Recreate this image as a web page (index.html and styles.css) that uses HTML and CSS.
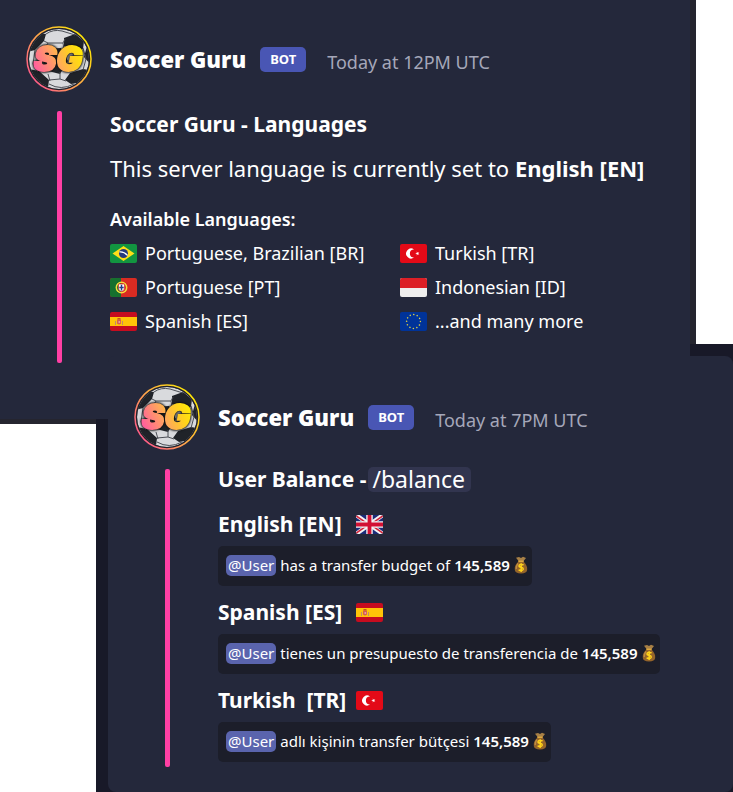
FILE: index.html
```html
<!DOCTYPE html>
<html lang="en">
<head>
<meta charset="utf-8">
<meta name="viewport" content="width=device-width, initial-scale=1">
<title>Soccer Guru - Languages</title>
<link rel="stylesheet" href="styles.css">
</head>
<body>
<svg class="sprite" aria-hidden="true">
  <defs>
    <linearGradient id="ring" x1="0" y1="1" x2="1" y2="0.2">
      <stop offset="0" stop-color="#ff3f9f"/><stop offset="0.5" stop-color="#ffa24e"/><stop offset="1" stop-color="#ffee00"/>
    </linearGradient>
    <linearGradient id="letters" x1="0" y1="0.6" x2="1" y2="0.2">
      <stop offset="0" stop-color="#ff5f9c"/><stop offset="0.45" stop-color="#ffab58"/><stop offset="0.75" stop-color="#ffd21c"/><stop offset="1" stop-color="#fff000"/>
    </linearGradient>
    <clipPath id="ball"><circle cx="33" cy="33" r="30"/></clipPath>
    <clipPath id="round"><rect width="27" height="19" rx="2"/></clipPath>
  </defs>
  <symbol id="logo" viewBox="0 0 66 66">
    <circle cx="33" cy="33" r="32" fill="#22232c" stroke="url(#ring)" stroke-width="1.5"/>
    <g clip-path="url(#ball)">
      <circle cx="33" cy="33" r="30" fill="#d9dadd"/>
      <path d="M12 7 L20 8 L18 15 L9 24 L1 26 V12Z M38 12 L49 8 L58 15 L57 23 L46 22 L38 20Z M61 20 L65 28 L64 38 L58 31Z M16 23 L35 22 L42 35 L34 48 L18 44Z M3 43 L13 45 L23 54 L22 62 L10 58Z M44 47 L57 43 L63 44 L57 56 L45 58 L39 54Z" fill="#202329"/>
      <path d="M20 8 Q27 3 36 5 L49 9 M18 15 L22 17 L37 17 L39 13 M22 17 L17 25 M37 17 L38 23 M9 24 L7 38 L12 46 M57 22 L60 33 L57 44 M23 54 L34 53 L40 55 M34 53 V46 M23 58 Q35 65 48 58 M22 48 L24 55" fill="none" stroke="#4b4e55" stroke-width="1"/>
    </g>
  </symbol>
  <symbol id="br" viewBox="0 0 27 19"><g clip-path="url(#round)"><rect width="27" height="19" fill="#129540"/><path d="M13.500 2 24.500 9.500 13.500 17 2.500 9.500Z" fill="#fedf17"/><circle cx="13.500" cy="9.500" r="4.500" fill="#263a7e"/><path d="M9.500 8Q14 7.500 17.500 11.500" fill="none" stroke="#fff" stroke-width="1.200"/></g></symbol>
  <symbol id="pt" viewBox="0 0 27 19"><g clip-path="url(#round)"><rect width="27" height="19" fill="#d92b22"/><rect width="11" height="19" fill="#16702e"/><circle cx="11.500" cy="9.500" r="5.200" fill="none" stroke="#f5dc3c" stroke-width="1.500"/><path d="M8.500 6H14.500V10Q14.500 13 11.500 13.500Q8.500 13 8.500 10Z" fill="#fff" stroke="#d92b22" stroke-width="0.700"/><path d="M11.500 6.800V12.500M9.300 9.500H13.700" stroke="#273e88" stroke-width="1.500"/></g></symbol>
  <symbol id="es" viewBox="0 0 27 19"><g clip-path="url(#round)"><rect width="27" height="19" fill="#c60c1f"/><rect y="5" width="27" height="9" fill="#ffc408"/><path d="M7 7.500H11V11.500Q9 13.500 7 11.500Z" fill="#d45e4f"/><path d="M7.500 6.800H10.500" stroke="#b42b22"/><path d="M5.500 9V13M12.500 9V13" stroke="#c08a6c"/><circle cx="9.300" cy="10" r="1" fill="#eca0a8"/></g></symbol>
  <symbol id="tr" viewBox="0 0 27 19"><g clip-path="url(#round)"><rect width="27" height="19" fill="#e30a17"/><path d="M14 5.400A5 5 0 1 0 14 13.600A4.100 4.100 0 1 1 14 5.400Z" fill="#fff"/><path d="M15.200 9.500 16.800 9 16.800 7.400 17.800 8.700 19.300 8.200 18.400 9.500 19.300 10.800 17.800 10.300 16.800 11.600 16.800 10Z" fill="#fff"/></g></symbol>
  <symbol id="id" viewBox="0 0 27 19"><g clip-path="url(#round)"><rect width="27" height="19" fill="#eee"/><rect width="27" height="10" fill="#dc1f26"/></g></symbol>
  <symbol id="eu" viewBox="0 0 27 19"><g clip-path="url(#round)"><rect width="27" height="19" fill="#039"/><circle cx="13.500" cy="9.500" r="6.900" fill="none" stroke="#d8cd47" stroke-width="1.500" stroke-linecap="round" stroke-dasharray="0.100 3.513"/></g></symbol>
  <symbol id="gb" viewBox="0 0 27 19"><g clip-path="url(#round)"><rect width="27" height="19" fill="#1b2b78"/><path d="M0 0 27 19M27 0 0 19" stroke="#f3f3f5" stroke-width="4.200"/><path d="M-1 0 12 9.200M28 19 15 9.800M28 0 15 9.200M-1 19 12 9.800" stroke="#d32338" stroke-width="1.500"/><path d="M13.500 0V19M0 9.500H27" stroke="#f3f3f5" stroke-width="6.500"/><path d="M13.500 0V19M0 9.500H27" stroke="#d21034" stroke-width="3.800"/></g></symbol>
  <symbol id="bag" viewBox="0 0 14 18"><path d="M2 1.800 5 1 7 2 9 .8 12 2 9.600 5H4.600Z" fill="#a88046"/><path d="M4.500 5.500C1.500 8 .5 10.500.8 14Q1.200 17.300 7 17.400Q12.800 17.300 13.200 14C13.500 10.500 12 8 9.500 5.500Z" fill="#94642a"/><path d="M4 7.500Q2 10 2.200 13" fill="none" stroke="#c08c43" stroke-width="1.300"/><path d="M4.300 5.300H9.700" stroke="#dda83f" stroke-width="1.500"/><path d="M9.600 8.800Q5.200 7.700 5 9.800Q5 11.200 7.200 11.400Q9.500 11.700 9.100 13.500Q8.500 15.200 4.600 14M7.200 7.300V16" fill="none" stroke="#ffd31a" stroke-width="1.500"/></symbol>
</svg>

<main class="showcase">
  <article class="message message-back">
    <div class="panel">
      <header class="message-header">
        <svg class="avatar" viewBox="0 0 66 66" role="img" aria-label="Soccer Guru logo"><use href="#logo"/><text class="logo-text" x="32" y="45" text-anchor="middle">SG</text></svg>
        <h2 class="author">Soccer Guru</h2>
        <span class="badge">BOT</span>
        <time class="time">Today at 12PM UTC</time>
      </header>
      <div class="embed">
        <h3 class="title">Soccer Guru - Languages</h3>
        <p class="status">This server language is currently set to <strong>English [EN]</strong></p>
        <h4 class="subtitle">Available Languages:</h4>
        <ul class="languages">
          <li><svg class="flag"><use href="#br"/></svg>Portuguese, Brazilian [BR]</li>
          <li><svg class="flag"><use href="#tr"/></svg>Turkish [TR]</li>
          <li><svg class="flag"><use href="#pt"/></svg>Portuguese [PT]</li>
          <li><svg class="flag"><use href="#id"/></svg>Indonesian [ID]</li>
          <li><svg class="flag"><use href="#es"/></svg>Spanish [ES]</li>
          <li><svg class="flag"><use href="#eu"/></svg>...and many more</li>
        </ul>
      </div>
    </div>
  </article>

  <article class="message message-front">
    <div class="panel">
      <header class="message-header">
        <svg class="avatar" viewBox="0 0 66 66" role="img" aria-label="Soccer Guru logo"><use href="#logo"/><text class="logo-text" x="32" y="45" text-anchor="middle">SG</text></svg>
        <h2 class="author">Soccer Guru</h2>
        <span class="badge">BOT</span>
        <time class="time">Today at 7PM UTC</time>
      </header>
      <div class="embed">
        <h3 class="title title-command">User Balance - <span class="command">/balance</span></h3>
        <h4 class="locale"><span class="locale-name">English [EN]</span><svg class="flag"><use href="#gb"/></svg></h4>
        <p class="reply"><span class="mention">@User</span><span>has a transfer budget of <b>145,589</b></span><svg class="bag"><use href="#bag"/></svg></p>
        <h4 class="locale"><span class="locale-name">Spanish [ES]</span><svg class="flag"><use href="#es"/></svg></h4>
        <p class="reply"><span class="mention">@User</span><span>tienes un presupuesto de transferencia de <b>145,589</b></span><svg class="bag"><use href="#bag"/></svg></p>
        <h4 class="locale"><span class="locale-name">Turkish&nbsp; [TR]</span><svg class="flag"><use href="#tr"/></svg></h4>
        <p class="reply"><span class="mention">@User</span><span>adlı kişinin transfer bütçesi <b>145,589</b></span><svg class="bag"><use href="#bag"/></svg></p>
      </div>
    </div>
  </article>
</main>
</body>
</html>
```
FILE: styles.css
```css
* { box-sizing: border-box; }

body {
  margin: 0;
  background: #fff;
  color: #fff;
  font-family: "Noto Sans", sans-serif;
}

h2, h3, h4, p, ul { margin: 0; padding: 0; }

.sprite { position: absolute; width: 0; height: 0; }

.showcase { overflow: hidden; }

.message-back {
  margin-right: 37px;
  padding: 0 6px 5px 0;
  background: #25252f;
}

.message-front {
  position: relative;
  margin: -80px 0 0 96px;
  padding: 12px 0 0 12px;
  background: #181928;
}

.panel {
  position: relative;
  z-index: 1;
  background: #24283b;
}

.message-back .panel { padding: 26px 20px 56px 26px; }

.message-front .panel {
  z-index: 2;
  padding: 28px 20px 25px 26px;
  border-radius: 6px 8px 8px 8px;
}

.message-header {
  display: flex;
  align-items: center;
  height: 66px;
}

.avatar { width: 66px; height: 66px; flex: none; }

.logo-text {
  font: italic 900 34px "Inter", sans-serif;
  fill: url(#letters);
  stroke: url(#letters);
  stroke-width: 2px;
  filter: drop-shadow(0 0 1px #111) drop-shadow(0 0 1px #111);
}

.author {
  margin-left: 18px;
  font-size: 22px;
  line-height: 32px;
  font-weight: 900;
}

.badge {
  margin-left: 14px;
  padding: 0 10px;
  border-radius: 5px;
  background: #4956b4;
  font-size: 13px;
  line-height: 25px;
  font-weight: 700;
}

.time {
  margin: 6px 0 0 21px;
  color: #a5a7b9;
  font-size: 18px;
  line-height: 26px;
}

.embed {
  display: flow-root;
  position: relative;
  margin: 19px 0 0 31px;
  padding-left: 53px;
}

.embed::before {
  content: "";
  position: absolute;
  top: 0;
  bottom: 0;
  left: 0;
  width: 5px;
  border-radius: 2px;
  background: #ff3fa4;
}

.message-front .embed { padding-bottom: 5px; }

.title {
  font-size: 21px;
  line-height: 26px;
  font-weight: 700;
}

.title-command {
  display: flex;
  align-items: center;
  gap: 2px;
  margin: -3px 0 16px;
}

.status {
  margin-top: 15px;
  font-size: 22px;
  line-height: 32px;
}

.subtitle {
  margin-top: 22px;
  font-size: 18px;
  line-height: 26px;
  font-weight: 600;
}

.languages {
  display: grid;
  grid-template-columns: 290px 1fr;
  padding: 4px 0 25px;
  font-size: 18px;
  line-height: 34px;
  list-style: none;
}

.languages li {
  display: flex;
  align-items: center;
  gap: 8px;
}

.flag { width: 27px; height: 19px; flex: none; }

.command {
  padding: 0 6px 0 4px;
  border-radius: 5px;
  background: #32354f;
  font-size: 23px;
  font-weight: 400;
  line-height: 25px;
}

.locale {
  display: flex;
  align-items: center;
  gap: 8px;
  margin-top: 10px;
  font-size: 21px;
  line-height: 32px;
  font-weight: 700;
}

.locale-name { min-width: 130px; }

.reply {
  display: flex;
  align-items: center;
  gap: 4px;
  width: fit-content;
  height: 40px;
  margin-top: 6px;
  padding: 0 4px 2px 8px;
  border-radius: 5px;
  background: #1c1e2a;
  font-size: 15px;
  line-height: 21px;
}

.reply b { font-weight: 600; }

.mention {
  padding: 0 2px;
  border-radius: 5px;
  background: #5a64ad;
}

.bag { width: 14px; height: 18px; }
```
